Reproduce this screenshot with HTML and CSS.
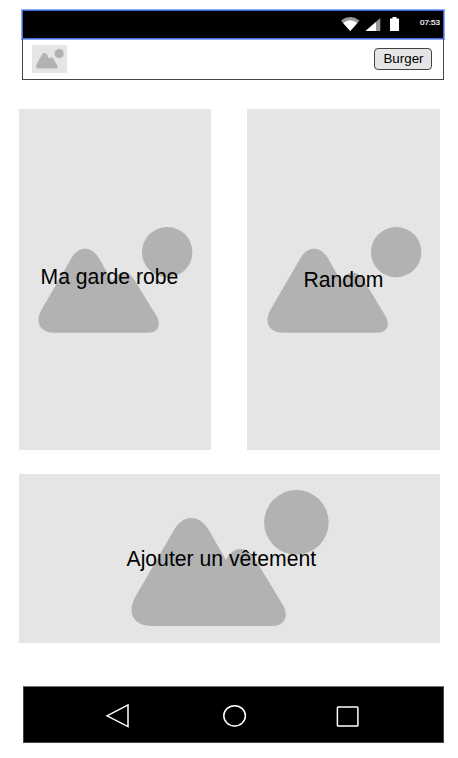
FILE: index.html
```html
<!DOCTYPE html>
<html lang="fr">
<head>
<meta charset="utf-8">
<title>Garde robe</title>
<link rel="stylesheet" href="styles.css">
</head>
<body>
<svg class="defs" aria-hidden="true">
  <symbol id="landscape" viewBox="62 60 594 408" preserveAspectRatio="none" overflow="visible">
    <path d="M190 182C218 131 268 131 297 182L347 269C360 248 372 237 391 237C412 237 424 250 438 272L518 404C538 438 524 468 485 468H125C66 468 50 425 75 380Z"/>
    <circle cx="559" cy="157" r="97"/>
  </symbol>
</svg>
<div class="screen">
  <div class="status">
    <svg class="signals" viewBox="0 0 62 20">
      <path fill="#999" d="M1 5.5Q10.2-1.4 19.5 5.5L10.2 16Z"/>
      <path fill="#fff" d="M3.100 8Q10.200 2.500 17.400 8L10.200 16Z"/>
      <path fill="#999" d="M40.300 3V16H25.500Z"/>
      <path fill="#fff" d="M36 7V16H25.500Z"/>
      <path fill="#fff" d="M50 3.500h2.500V2h4v1.500H59V16H50Z"/>
    </svg>
    <time class="clock">07:53</time>
  </div>
  <header class="header">
    <div class="logo"><svg class="logo-art"><use href="#landscape"/></svg></div>
    <button class="burger">Burger</button>
  </header>
  <main class="cards">
    <section class="card">
      <svg class="art"><use href="#landscape"/></svg>
      <span class="label wardrobe">Ma garde robe</span>
    </section>
    <section class="card">
      <svg class="art"><use href="#landscape"/></svg>
      <span class="label random">Random</span>
    </section>
    <section class="card wide">
      <svg class="art"><use href="#landscape"/></svg>
      <span class="label add">Ajouter un vêtement</span>
    </section>
  </main>
  <nav class="nav">
    <svg class="nav-icons" viewBox="0 0 421 57">
      <path d="M84 29.800L105 18.900V40.600Z"/>
      <ellipse cx="211.600" cy="29.800" rx="10.800" ry="10.100"/>
      <rect x="314.400" y="21" width="20.500" height="19" rx=".8"/>
    </svg>
  </nav>
</div>
</body>
</html>
```
FILE: styles.css
```css
* {
  box-sizing: border-box;
}

body {
  margin: 0;
  background: #fff;
  color: #000;
  font-family: "Liberation Sans", Arial, sans-serif;
}

.defs {
  display: none;
}

.screen {
  display: flex;
  flex-direction: column;
  width: 458px;
  height: 758px;
  padding: 10px 14px 0 22px;
}

.status {
  display: flex;
  justify-content: flex-end;
  height: 29px;
  padding-right: 3px;
  border: 1px solid #3e68e0;
  background: #000;
  outline: 1px solid #8fa9f0;
}

.signals {
  width: 62px;
  height: 20px;
  margin: 4px 18px 0 0;
}

.clock {
  margin-top: 7px;
  color: #fff;
  font-size: 8px;
  line-height: 10px;
  -webkit-text-stroke: 0.2px #fff;
}

.header {
  display: flex;
  justify-content: space-between;
  height: 41px;
  padding: 5px 11px 0 9px;
  border: 1px solid #444;
  border-top: 0;
}

.logo {
  width: 34.500px;
  height: 28px;
  margin-top: 1px;
  padding: 4.300px 0 0 3.500px;
  background: #e5e5e5;
}

.logo-art {
  display: block;
  width: 27.700px;
  height: 19.500px;
  overflow: visible;
  fill: #b2b2b2;
}

.burger {
  width: 58px;
  height: 22px;
  margin-top: 4px;
  padding: 0 0 0 1px;
  border: 1px solid #444;
  border-radius: 4px;
  background: #e5e5e5;
  color: #000;
  font: 13.333px/20px "Liberation Sans", Arial, sans-serif;
}

.cards {
  display: grid;
  grid-template-columns: 192.400px 192.400px;
  grid-template-rows: 341px 169.500px;
  gap: 23.500px 36px;
  margin: 29px 0 0 -3px;
}

.card {
  display: grid;
  background: #e5e5e5;
}

.wide {
  grid-column: 1 / 3;
}

.art,
.label {
  grid-area: 1 / 1;
}

.art {
  width: 154.400px;
  height: 105.700px;
  margin: 117.700px 0 0 19.200px;
  overflow: visible;
  fill: #b2b2b2;
}

.wide .art {
  width: 197.700px;
  height: 136px;
  margin: 16.700px 0 0 111.500px;
}

.label {
  font-size: 21.200px;
  line-height: 24px;
  white-space: nowrap;
}

.wardrobe {
  margin: 156px 0 0 21.500px;
}

.random {
  margin: 159px 0 0 56px;
}

.add {
  margin: 73.500px 0 0 107.500px;
}

.nav {
  width: 421px;
  height: 57px;
  margin: 43px 0 0 1px;
  border: 1px solid #444;
  border-top-color: #777;
  background: #000;
}

.nav-icons {
  display: block;
  width: 421px;
  height: 57px;
  margin: -1px;
  fill: none;
  stroke: #fff;
  stroke-width: 1.500;
}
```
